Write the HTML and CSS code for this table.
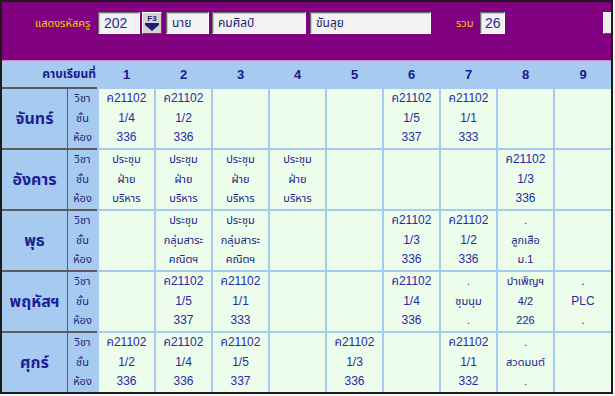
FILE: index.html
```html
<!DOCTYPE html>
<html lang="th">
<head>
<meta charset="utf-8">
<title>ตารางสอน</title>
<link rel="stylesheet" href="styles.css">
</head>
<body>
<div class="frame">
  <div class="topbar">
    <span class="lbl lbl-code">แสดงรหัสครู</span>
    <span class="box box-code">202</span>
    <span class="btn-f3"><span class="f3">F3</span><svg width="14" height="8" viewBox="0 0 14 8"><rect x="0" y="0" width="14" height="2" fill="#1a1a80"/><polygon points="0,2 14,2 7,8" fill="#1a1a80"/></svg></span>
    <span class="box box-title">นาย</span>
    <span class="box box-first">คมศิลป์</span>
    <span class="box box-last">ขันลุย</span>
    <span class="lbl lbl-sum">รวม</span>
    <span class="box box-sum">26</span>
    <span class="btn-edge"></span>
  </div>
  <div class="grid">
    <div class="hd hd-side">คาบเรียนที่</div>
    <div class="hd">1</div><div class="hd">2</div><div class="hd">3</div><div class="hd">4</div><div class="hd">5</div><div class="hd">6</div><div class="hd">7</div><div class="hd">8</div><div class="hd">9</div>

    <div class="side"><div class="day">จันทร์</div><div class="labels"><span>วิชา</span><span>ชั้น</span><span>ห้อง</span></div></div>
    <div class="cell"><span>ค21102</span><span>1/4</span><span>336</span></div>
    <div class="cell"><span>ค21102</span><span>1/2</span><span>336</span></div>
    <div class="cell"></div>
    <div class="cell"></div>
    <div class="cell"></div>
    <div class="cell"><span>ค21102</span><span>1/5</span><span>337</span></div>
    <div class="cell"><span>ค21102</span><span>1/1</span><span>333</span></div>
    <div class="cell"></div>
    <div class="cell"></div>

    <div class="side"><div class="day">อังคาร</div><div class="labels"><span>วิชา</span><span>ชั้น</span><span>ห้อง</span></div></div>
    <div class="cell th"><span>ประชุม</span><span>ฝ่าย</span><span>บริหาร</span></div>
    <div class="cell th"><span>ประชุม</span><span>ฝ่าย</span><span>บริหาร</span></div>
    <div class="cell th"><span>ประชุม</span><span>ฝ่าย</span><span>บริหาร</span></div>
    <div class="cell th"><span>ประชุม</span><span>ฝ่าย</span><span>บริหาร</span></div>
    <div class="cell"></div>
    <div class="cell"></div>
    <div class="cell"></div>
    <div class="cell"><span>ค21102</span><span>1/3</span><span>336</span></div>
    <div class="cell"></div>

    <div class="side"><div class="day">พุธ</div><div class="labels"><span>วิชา</span><span>ชั้น</span><span>ห้อง</span></div></div>
    <div class="cell"></div>
    <div class="cell th"><span>ประชุม</span><span>กลุ่มสาระ</span><span>คณิตฯ</span></div>
    <div class="cell th"><span>ประชุม</span><span>กลุ่มสาระ</span><span>คณิตฯ</span></div>
    <div class="cell"></div>
    <div class="cell"></div>
    <div class="cell"><span>ค21102</span><span>1/3</span><span>336</span></div>
    <div class="cell"><span>ค21102</span><span>1/2</span><span>336</span></div>
    <div class="cell th"><span>.</span><span>ลูกเสือ</span><span>ม.1</span></div>
    <div class="cell"></div>

    <div class="side"><div class="day">พฤหัสฯ</div><div class="labels"><span>วิชา</span><span>ชั้น</span><span>ห้อง</span></div></div>
    <div class="cell"></div>
    <div class="cell"><span>ค21102</span><span>1/5</span><span>337</span></div>
    <div class="cell"><span>ค21102</span><span>1/1</span><span>333</span></div>
    <div class="cell"></div>
    <div class="cell"></div>
    <div class="cell"><span>ค21102</span><span>1/4</span><span>336</span></div>
    <div class="cell th"><span>.</span><span>ชุมนุม</span><span>.</span></div>
    <div class="cell th"><span>บำเพ็ญฯ</span><span>4/2</span><span>226</span></div>
    <div class="cell"><span>.</span><span>PLC</span><span>.</span></div>

    <div class="side"><div class="day">ศุกร์</div><div class="labels"><span>วิชา</span><span>ชั้น</span><span>ห้อง</span></div></div>
    <div class="cell"><span>ค21102</span><span>1/2</span><span>336</span></div>
    <div class="cell"><span>ค21102</span><span>1/4</span><span>336</span></div>
    <div class="cell"><span>ค21102</span><span>1/5</span><span>337</span></div>
    <div class="cell"></div>
    <div class="cell"><span>ค21102</span><span>1/3</span><span>336</span></div>
    <div class="cell"></div>
    <div class="cell"><span>ค21102</span><span>1/1</span><span>332</span></div>
    <div class="cell th"><span>.</span><span>สวดมนต์</span><span>.</span></div>
    <div class="cell"></div>
  </div>
</div>
</body>
</html>
```
FILE: styles.css
```css
* { box-sizing: border-box; }
html, body { margin: 0; padding: 0; }
body {
  background: #f4f4f4;
  font-family: "Liberation Sans", "Noto Sans Thai", "Noto Sans", sans-serif;
  color: #2424a8;
}
.frame {
  width: 613px;
  border: 2px solid #1c1c1c;
  background: #a6caf0;
  overflow: hidden;
}
.topbar {
  height: 59px;
  background: #800080;
  border-bottom: 1px solid #c48ac4;
  display: flex;
  align-items: flex-start;
  padding-top: 10px;
  padding-left: 33px;
  overflow: hidden;
  white-space: nowrap;
}
.topbar > * { flex: none; }
.lbl {
  color: #f0d000;
  font-size: 11px;
  line-height: 22px;
  height: 22px;
}
.lbl-code { width: 63px; }
.box {
  height: 22px;
  background: #f2f2f2;
  border: 1px solid;
  border-color: #6e6e6e #ffffff #ffffff #6e6e6e;
  box-shadow: inset 1px 1px 0 #c8c8c8;
  font-size: 12px;
  line-height: 20px;
  padding-left: 5px;
  color: #1a1a70;
}
.box-code { width: 42px; font-size: 14px; color: #2828a0; }
.btn-f3 {
  width: 20px;
  height: 22px;
  margin-left: 2px;
  background: #d6d3ce;
  border: 1px solid;
  border-color: #ffffff #505050 #505050 #ffffff;
  display: flex;
  flex-direction: column;
  align-items: center;
  padding-top: 1px;
}
.f3 {
  font-size: 8px;
  line-height: 9px;
  font-weight: bold;
  color: #1a1a80;
}
.box-title { width: 43px; margin-left: 4px; }
.box-first { width: 94px; margin-left: 3px; }
.box-last { width: 121px; margin-left: 4px; }
.lbl-sum { margin-left: 25px; width: 24px; }
.box-sum { width: 25px; margin-left: 0; font-size: 14px; color: #2828a0; padding-left: 4px; }
.btn-edge {
  width: 24px;
  height: 22px;
  margin-left: 98px;
  background: #eeeeee;
  border: 1px solid;
  border-color: #ffffff #505050 #505050 #ffffff;
}
.grid {
  display: grid;
  grid-template-columns: 95px repeat(8, 55px) 1fr;
  grid-template-rows: 26px repeat(5, 61px);
  column-gap: 2px;
  background: #a6caf0;
}
.hd {
  display: flex;
  align-items: center;
  justify-content: center;
  font-weight: bold;
  font-size: 13px;
  color: #1a1a8c;
}
.hd-side {
  justify-content: flex-end;
  font-size: 12px;
  padding-right: 1px;
}
.side {
  display: flex;
  border-top: 2px solid #5c5c5c;
  background: #a6caf0;
}
.day {
  width: 66px;
  border-right: 1px solid #5c5c5c;
  display: flex;
  align-items: center;
  justify-content: center;
  font-weight: bold;
  font-size: 16px;
  color: #1e1e96;
}
.labels {
  flex: 1;
  display: flex;
  flex-direction: column;
  align-items: center;
  font-size: 11px;
  color: #1e1e80;
}
.labels span, .cell span {
  height: 19.7px;
  line-height: 19.7px;
}
.cell {
  border-top: 2px solid #a6caf0;
  background: #ecfdec;
  display: flex;
  flex-direction: column;
  align-items: center;
  font-size: 12px;
  color: #2a2aa8;
}
.cell.th { font-size: 11px; color: #22228a; }
```
